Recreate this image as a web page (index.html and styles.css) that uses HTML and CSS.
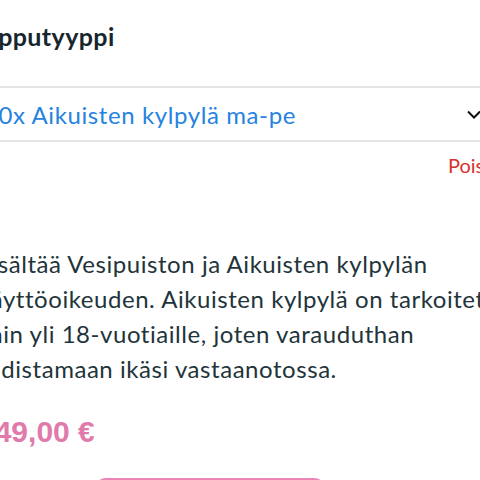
FILE: index.html
```html
<!doctype html>
<html>
<head>
<meta charset="utf-8">
<title>Lipputyyppi</title>
<link rel="stylesheet" href="styles.css">
</head>

<body>
<div class="page">
	<h2 class="title">Lipputyyppi</h2>
	<div class="select">
		<span class="select_text">10x Aikuisten kylpylä ma-pe</span>
		<svg class="chev" width="14" height="9" viewBox="0 0 14 9"><path d="M1 1.5 L7 7.5 L13 1.5" fill="none" stroke="#111" stroke-width="2"/></svg>
	</div>
	<div class="remove">Poista</div>
	<p class="desc">Sisältää Vesipuiston ja Aikuisten kylpylän<br>käyttöoikeuden. Aikuisten kylpylä on tarkoitettu<br>vain yli 18-vuotiaille, joten varauduthan<br>todistamaan ikäsi vastaanotossa.</p>
	<div class="price">149,00 €</div>
	<div class="btn_wrap"><span class="btn">Lisää ostoskoriin</span></div>
</div>
</body>
</html>
```

FILE: styles.css
```css
*{ padding:0; margin:0; box-sizing:border-box;}
html,body{ width:480px; height:480px; overflow:hidden; background:#fff;}
.page{ width:560px; margin-left:-22px; font-family:Lato,"Open Sans",sans-serif; color:#22343a;}
.title{ font-size:25px; font-weight:700; letter-spacing:0.4px; color:#16262c; padding-top:21px; height:86px;}
.select{ display:flex; align-items:center; height:56px; border-top:2px solid #e4e4e4; border-bottom:2px solid #e4e4e4; width:522px; padding-left:6px; padding-right:19px;}
.select_text{ flex:1; font-size:24px; letter-spacing:0.6px; color:#2683df; white-space:nowrap;}
.chev{ flex:none;}
.remove{ font-size:20px; color:#d6322e; padding-left:470px; padding-top:11px; height:100px; white-space:nowrap;}
.desc{ font-size:24px; line-height:35px; letter-spacing:0.55px; white-space:nowrap; padding-top:4px;}
.price{ font-family:"Liberation Sans",Arial,sans-serif; font-weight:700; font-size:30px; line-height:34px; color:#e07aab; margin-top:29px; padding-left:0;}
.btn_wrap{ padding-left:116px; margin-top:29px;}
.btn{ display:inline-block; width:232px; height:50px; line-height:50px; text-align:center; border-radius:12px; background:#e986b5; color:#fff; font-size:18px;}
```
